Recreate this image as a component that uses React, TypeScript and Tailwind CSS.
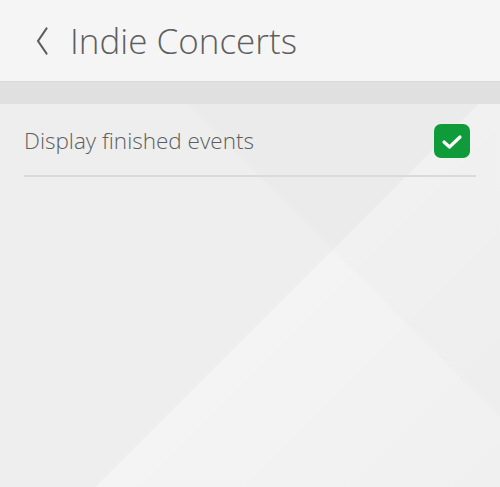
import React, { useState } from 'react';

export default function App() {
  const [showFinished, setShowFinished] = useState(true);

  return (
    <div className="flex h-[487px] w-[500px] flex-col overflow-hidden bg-[#eeeeee] font-['Open_Sans',sans-serif] text-[#5e5e5e]">
      {/* Header */}
      <header className="flex h-[82px] shrink-0 items-center border-b border-[#d8d8d8] bg-[#f5f5f5]">
        <button className="ml-[35px] flex h-[30px] w-[14px] items-center justify-center" aria-label="Back">
          <svg width="12" height="28" viewBox="0 0 12 28" fill="none">
            <polyline points="10.5,1.5 2,14 10.5,26.5" stroke="#5e5e5e" strokeWidth="2.2" strokeLinecap="round" strokeLinejoin="round" />
          </svg>
        </button>
        <h1 className="ml-[21px] mt-[1px] text-[35px] font-light">Indie Concerts</h1>
      </header>

      {/* Section band */}
      <div className="h-[22px] shrink-0 bg-[#e0e0e0]" />

      {/* Content */}
      <main className="relative flex-1">
        <div className="absolute inset-0 bg-[linear-gradient(135deg,transparent_338px,rgba(255,255,255,0.35)_338px,rgba(255,255,255,0.12)_624px)]" />
        <div className="absolute inset-0 bg-[linear-gradient(45deg,transparent_403px,rgba(0,0,0,0.012)_403px)]" />

        <div className="relative px-6">
          <label className="flex h-[73px] cursor-pointer items-center justify-between border-b-2 border-[#dadada] pt-[2px]">
            <span className="text-[22.5px] font-light">Display finished events</span>
            <button
              onClick={() => setShowFinished(!showFinished)}
              className={`mr-[6px] flex h-[34px] w-[36px] items-center justify-center rounded-[7px] ${
                showFinished ? 'bg-[#0f9b3a]' : 'border border-[#c8c8c8] bg-white'
              }`}
              aria-label="Display finished events"
            >
              {showFinished && (
                <svg width="36" height="34" viewBox="0 0 36 34" fill="none">
                  <polyline points="10,18 15.5,23 26,13" stroke="white" strokeWidth="3.2" strokeLinecap="round" strokeLinejoin="round" />
                </svg>
              )}
            </button>
          </label>
        </div>
      </main>
    </div>
  );
}
